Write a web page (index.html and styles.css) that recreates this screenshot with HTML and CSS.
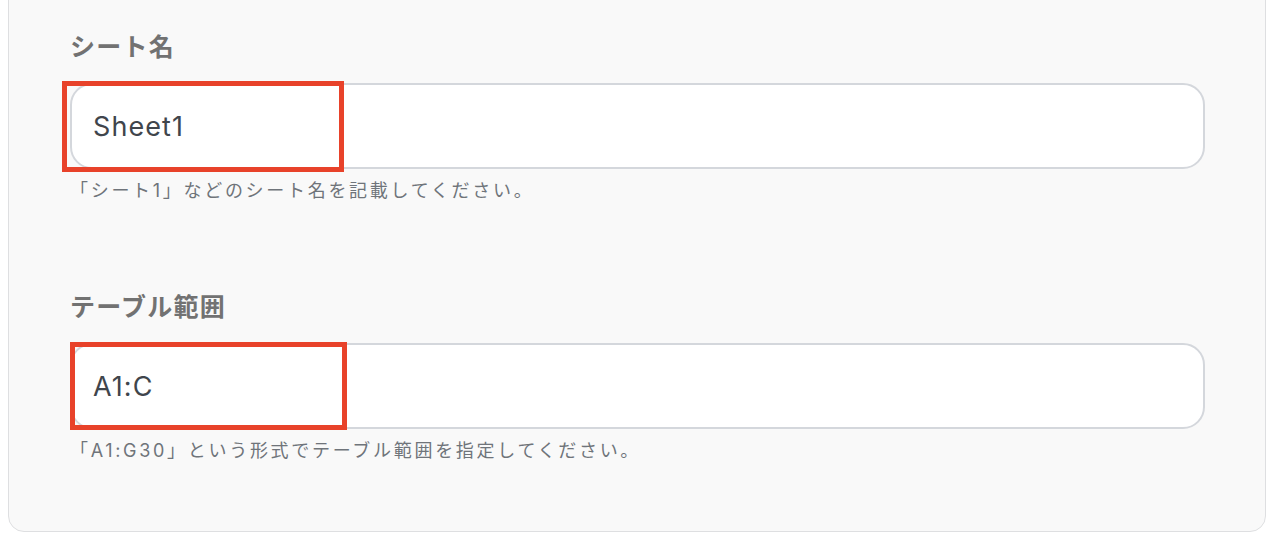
FILE: index.html
```html
<!DOCTYPE html>
<html lang="ja">
<head>
<meta charset="utf-8">
<link rel="stylesheet" href="styles.css">
</head>
<body>
<div class="card">
  <div class="field">
    <div class="label">シート名</div>
    <div class="input-wrap">
      <div class="input">Sheet1</div>
      <div class="mark mark-1"></div>
    </div>
    <div class="help">「シート1」などのシート名を記載してください。</div>
  </div>
  <div class="field field-2">
    <div class="label">テーブル範囲</div>
    <div class="input-wrap">
      <div class="input">A1:C</div>
      <div class="mark mark-2"></div>
    </div>
    <div class="help">「A1:G30」という形式でテーブル範囲を指定してください。</div>
  </div>
</div>
</body>
</html>
```
FILE: styles.css
```css
html, body {
  margin: 0;
  padding: 0;
  background: #ffffff;
}
body {
  font-family: Inter, "Noto Sans CJK JP", sans-serif;
  width: 1266px;
  height: 538px;
  overflow: hidden;
}
.card {
  box-sizing: border-box;
  margin: -30px 0 0 8px;
  width: 1258px;
  background: #f9f9f9;
  border: 1px solid #dedfe1;
  border-radius: 16px;
  padding: 56px 60px 68px 61px;
}
.field-2 {
  margin-top: 84px;
}
.label {
  font-family: "Noto Sans CJK JP", sans-serif;
  font-weight: 700;
  font-size: 25px;
  line-height: 36px;
  color: #727272;
  letter-spacing: 0.05em;
}
.input-wrap {
  position: relative;
  margin-top: 20px;
}
.input {
  box-sizing: border-box;
  height: 86px;
  background: #ffffff;
  border: 2px solid #d4d7dc;
  border-radius: 22px;
  padding-left: 21px;
  display: flex;
  align-items: center;
  font-size: 27px;
  color: #40454c;
  letter-spacing: 0.04em;
}
.mark {
  position: absolute;
  box-sizing: border-box;
  border: 5px solid #e8422a;
}
.mark-1 {
  left: -8px;
  top: -2px;
  width: 282px;
  height: 91px;
}
.mark-2 {
  left: 0;
  top: -1px;
  width: 277px;
  height: 88px;
}
.help {
  margin-top: 10px;
  font-size: 18px;
  line-height: 24px;
  color: #6f747a;
  letter-spacing: 0.15em;
}
```
